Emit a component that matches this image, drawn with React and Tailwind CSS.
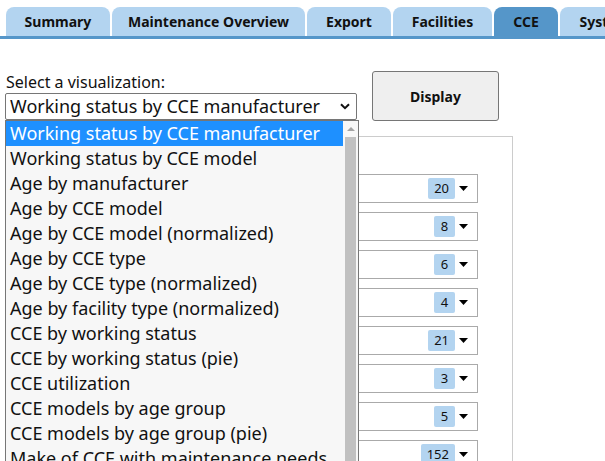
import { useState } from "react";

const tabs = [
  { label: "Summary", w: "w-[104px]" },
  { label: "Maintenance Overview", w: "w-[193px]" },
  { label: "Export", w: "w-[84px]" },
  { label: "Facilities", w: "w-[99px]" },
  { label: "CCE", w: "w-[64px]", active: true },
  { label: "System", w: "w-[90px]" },
];

const options = [
  "Working status by CCE manufacturer",
  "Working status by CCE model",
  "Age by manufacturer",
  "Age by CCE model",
  "Age by CCE model (normalized)",
  "Age by CCE type",
  "Age by CCE type (normalized)",
  "Age by facility type (normalized)",
  "CCE by working status",
  "CCE by working status (pie)",
  "CCE utilization",
  "CCE models by age group",
  "CCE models by age group (pie)",
  "Make of CCE with maintenance needs",
];

const counts = [20, 8, 6, 4, 21, 3, 5, 152];

function Caret() {
  return (
    <svg width="9" height="5" viewBox="0 0 9 5" className="shrink-0">
      <path d="M0 0h9L4.5 5z" fill="#000" />
    </svg>
  );
}

function App() {
  const [selected] = useState(0);

  return (
    <div className="w-[605px] h-[461px] overflow-hidden bg-white text-[#111] font-['Noto_Sans','Open_Sans',sans-serif]">
      {/* tab bar */}
      <nav className="flex gap-[2px] pl-[6px] pt-[7px] border-b-[3px] border-[#5596c9] whitespace-nowrap overflow-hidden">
        {tabs.map((t) => (
          <div
            key={t.label}
            className={`${t.w} shrink-0 h-[29px] leading-[29px] text-center text-[14px] font-bold rounded-t-[8px] ${
              t.active ? "bg-[#5596c9]" : "bg-[#b3d4f0]"
            }`}
          >
            {t.label}
          </div>
        ))}
      </nav>

      <main className="relative">
        <div className="flex items-start gap-[15px] pt-[32px] pl-[5px]">
          <div className="w-[352px]">
            <label className="block text-[16px] leading-[22px] pl-px">Select a visualization:</label>
            <div className="h-[27px] border border-[#767676] rounded-[2px] flex items-center justify-between pl-[4px] pr-[6px] bg-white">
              <span className="text-[18px] leading-[25px]">{options[selected]}</span>
              <svg width="10" height="7" viewBox="0 0 10 7">
                <path d="M1 1.2l4 4 4-4" fill="none" stroke="#111" strokeWidth="2" />
              </svg>
            </div>
          </div>
          <button className="w-[127px] h-[50px] bg-[#efefef] border border-[#767676] rounded-[3px] text-[14px] font-bold">
            Display
          </button>
        </div>

        {/* result panel, partly under the open list */}
        <section className="mt-[15px] ml-[5px] w-[508px] h-[400px] border border-[#cccccc] pt-[37px] pr-[34px] pl-[30px] flex flex-col gap-[9px]">
          {counts.map((n, i) => (
            <div key={i} className="h-[29px] shrink-0 border border-[#aaaaaa] flex items-center justify-end gap-[4px] pr-[9px]">
              <span className="h-[21px] min-w-[21px] px-[6px] rounded-[2px] bg-[#b3d4f0] text-[13px] leading-[21px] text-center">
                {n}
              </span>
              <Caret />
            </div>
          ))}
        </section>

        {/* open option list */}
        <div className="absolute left-[5px] top-[81px] w-[354px] h-[400px] border border-[#767676] bg-[#f7f7f7] flex">
          <ul className="w-[337px]">
            {options.map((o, i) => (
              <li
                key={o}
                className={`h-[25px] leading-[25px] text-[18px] pl-[4px] whitespace-nowrap overflow-hidden ${
                  i === selected ? "bg-[#1e90ff] text-white" : ""
                }`}
              >
                {o}
              </li>
            ))}
          </ul>
          <div className="w-[15px] flex flex-col items-center pt-[6px] px-[2px]">
            <svg width="8" height="4" viewBox="0 0 8 4">
              <path d="M0 4L4 0l4 4z" fill="#a3a3a3" />
            </svg>
            <div className="mt-[6px] w-[11px] flex-1 bg-[#c1c1c1]" />
          </div>
        </div>
      </main>
    </div>
  );
}

export default App;
